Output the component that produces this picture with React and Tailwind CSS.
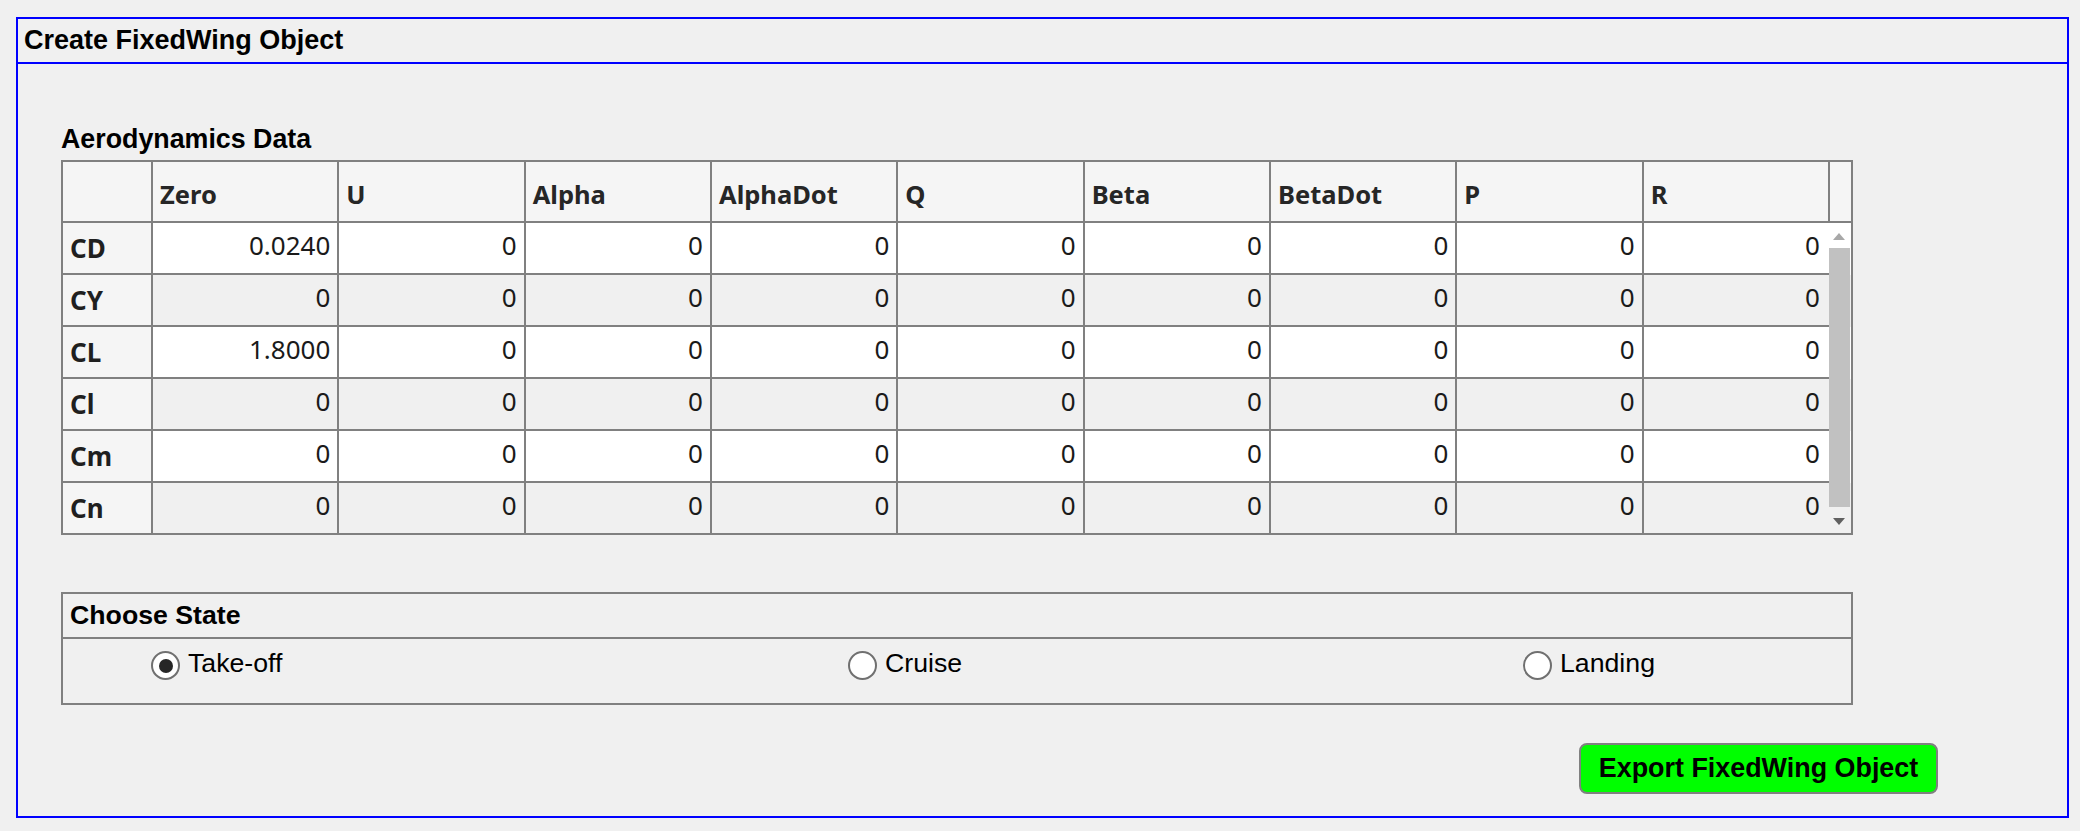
import React from "react";

const cols = ["Zero", "U", "Alpha", "AlphaDot", "Q", "Beta", "BetaDot", "P", "R"];
const rows = [
  { name: "CD", vals: ["0.0240", "0", "0", "0", "0", "0", "0", "0", "0"] },
  { name: "CY", vals: ["0", "0", "0", "0", "0", "0", "0", "0", "0"] },
  { name: "CL", vals: ["1.8000", "0", "0", "0", "0", "0", "0", "0", "0"] },
  { name: "Cl", vals: ["0", "0", "0", "0", "0", "0", "0", "0", "0"] },
  { name: "Cm", vals: ["0", "0", "0", "0", "0", "0", "0", "0", "0"] },
  { name: "Cn", vals: ["0", "0", "0", "0", "0", "0", "0", "0", "0"] },
];

const arial = { fontFamily: '"Liberation Sans", Arial, sans-serif' };
const noto = { fontFamily: '"Noto Sans", "Open Sans", sans-serif' };

function Radio({ checked, label, className }) {
  return (
    <div className={"flex items-start " + (className || "")}>
      <span className="mt-[12px] w-[29px] h-[29px] rounded-full border-2 border-[#707070] bg-white flex items-center justify-center shrink-0">
        {checked && <span className="w-[14px] h-[14px] rounded-full bg-[#262626]" />}
      </span>
      <span className="ml-[8px] mt-[9px] text-[26.7px] leading-[31px] text-black" style={arial}>
        {label}
      </span>
    </div>
  );
}

export default function App() {
  return (
    <div className="w-[2080px] h-[831px] bg-[#f0f0f0] pt-[17px] pl-[16px] overflow-hidden">
      <div className="w-[2053px] h-[801px] border-2 border-[#0000ff] flex flex-col">
        <div
          className="h-[45px] shrink-0 border-b-2 border-[#0000ff] flex items-center pl-[6px] text-[27px] leading-[31px] font-bold text-black"
          style={arial}
        >
          Create FixedWing Object
        </div>
        <div className="pl-[43px] flex flex-col">
          <div className="mt-[60px] h-[31px] text-[26.8px] leading-[31px] font-bold text-black" style={arial}>
            Aerodynamics Data
          </div>
          {/* Table */}
          <div className="mt-[5px] w-[1792px] border-2 border-[#808080] bg-white" style={noto}>
            <div className="grid grid-cols-[90px_repeat(9,186.33px)_1fr] h-[61px] bg-[#f5f5f5]">
              <div className="border-r-2 border-b-2 border-[#808080]" />
              {cols.map((c) => (
                <div
                  key={c}
                  className="border-r-2 border-b-2 border-[#808080] flex items-center pl-[7px] pt-[5px] text-[25.5px] font-bold text-[#262626]"
                >
                  {c}
                </div>
              ))}
              <div className="border-b-2 border-[#808080]" />
            </div>
            <div className="relative">
              {rows.map((r, i) => {
                const last = i === rows.length - 1;
                const bg = i % 2 === 0 ? "bg-white" : "bg-[#f0f0f0]";
                return (
                  <div
                    key={r.name}
                    className={
                      "grid grid-cols-[90px_repeat(9,186.33px)_1fr] " +
                      (last ? "h-[50px] " : "h-[52px] ") +
                      bg
                    }
                  >
                    <div
                      className={
                        "bg-[#f5f5f5] border-r-2 border-[#808080] flex items-center pl-[7px] text-[26px] font-bold text-[#1f1f1f] " +
                        (last ? "" : "border-b-2")
                      }
                    >
                      {r.name}
                    </div>
                    {r.vals.map((v, j) => (
                      <div
                        key={j}
                        className={
                          "border-[#808080] flex items-center justify-end pb-[6px] text-[26px] text-[#1a1a1a] " +
                          (j < 8 ? "border-r-2 pr-[7px] " : "pr-[10px] ") +
                          (last ? "" : "border-b-2")
                        }
                      >
                        {v}
                      </div>
                    ))}
                    <div />
                  </div>
                );
              })}
              {/* scrollbar overlay */}
              <div className="absolute left-[1766px] top-0 w-[21px] h-full">
                <svg className="absolute left-[4px] top-[10px]" width="12" height="7" viewBox="0 0 12 7">
                  <path d="M0 7 L6 0 L12 7 Z" fill="#a8a8a8" />
                </svg>
                <div className="absolute left-0 top-[25px] w-[21px] h-[259px] bg-[#c1c1c1]" />
                <svg className="absolute left-[4px] top-[295px]" width="12" height="7" viewBox="0 0 12 7">
                  <path d="M0 0 L12 0 L6 7 Z" fill="#606060" />
                </svg>
              </div>
            </div>
          </div>
          {/* Choose State */}
          <div className="mt-[57px] w-[1792px] border-2 border-[#808080]" style={arial}>
            <div className="h-[45px] border-b-2 border-[#808080] flex items-center pl-[7px] text-[26.7px] leading-[31px] font-bold text-black">
              Choose State
            </div>
            <div className="h-[64px] flex pl-[88px]">
              <Radio checked label="Take-off" className="w-[697px]" />
              <Radio label="Cruise" className="w-[675px]" />
              <Radio label="Landing" />
            </div>
          </div>
          <div className="mt-[38px] ml-[1518px]">
            <button
              className="w-[359px] h-[51px] rounded-[8px] border-2 border-[#808080] bg-[#00ff00] flex items-center justify-center text-[26.9px] leading-[31px] font-bold text-black"
              style={arial}
            >
              Export FixedWing Object
            </button>
          </div>
        </div>
      </div>
    </div>
  );
}
